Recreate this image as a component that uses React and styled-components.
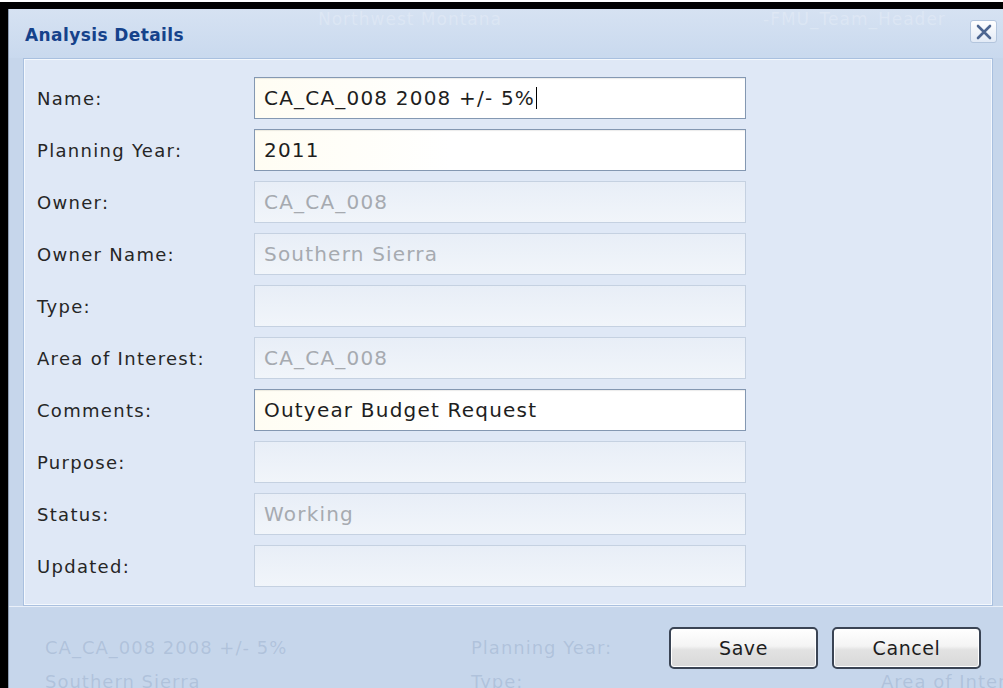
import React from "react";
import styled, { createGlobalStyle } from "styled-components";

const GlobalStyle = createGlobalStyle`
  html, body {
    margin: 0;
    padding: 0;
    background: #ffffff;
  }
  * {
    box-sizing: border-box;
  }
`

const Screen = styled.div`
  width: 1003px;
  height: 688px;
  padding-top: 2px;
  background: #ffffff;
  overflow: hidden;
`

const Frame = styled.div`
  height: 686px;
  border-top: 7px solid #000000;
  border-left: 8px solid #000000;
  display: flex;
`

const Dialog = styled.div`
  flex: 1;
  display: flex;
  flex-direction: column;
  background: #c6d6eb;
  border-left: 1px solid #8c9cb2;
  font-family: "DejaVu Sans", Verdana, sans-serif;
`

const TitleBar = styled.div`
  position: relative;
  height: 49px;
  display: flex;
  align-items: center;
  justify-content: space-between;
  padding: 2px 6px 0 16px;
  background: linear-gradient(#d6e2f2, #c9d9ee);
`

const Title = styled.div`
  font-size: 17px;
  font-weight: bold;
  letter-spacing: 0.4px;
  color: #15428b;
`

// faint text of the page under the window
const Backdrop = styled.div`
  position: absolute;
  inset: 0;
  pointer-events: none;
`

const GhostText = styled.span`
  position: absolute;
  left: ${p => p.x}px;
  top: ${p => p.y}px;
  font-size: ${p => p.size || 18}px;
  letter-spacing: 1px;
  white-space: nowrap;
  color: ${p => p.light ? "rgba(255,255,255,0.22)" : "rgba(120,145,180,0.28)"};
`

const CloseButton = styled.button`
  width: 27px;
  height: 23px;
  padding: 0;
  margin-top: -6px;
  display: flex;
  align-items: center;
  justify-content: center;
  border: 1px solid #b3c5dd;
  border-radius: 3px;
  background: linear-gradient(#ffffff, #e2eaf6);
  cursor: pointer;
`

const Panel = styled.div`
  margin: 0 10px 0 14px;
  padding: 18px 13px 18px 13px;
  background: #dfe8f6;
  border: 1px solid #a9c0df;
  box-shadow: inset 0 0 0 1px #f4f8fd;
  display: flex;
  flex-direction: column;
  gap: 10px;
`

const Row = styled.div`
  display: flex;
  align-items: center;
  height: 42px;
`

const Label = styled.div`
  width: 217px;
  font-size: 18px;
  letter-spacing: 1.3px;
  color: #262626;
`

const Field = styled.div`
  width: 492px;
  height: 42px;
  display: flex;
  align-items: center;
  padding: 0 9px;
  font-size: 20px;
  letter-spacing: 1.2px;
  white-space: nowrap;
  border: 1px solid ${p => p.disabled ? "#c5d1e1" : "#8498b2"};
  background: ${p => p.disabled
    ? "linear-gradient(#e8eef7, #f1f5fa)"
    : "linear-gradient(90deg, #fffdf3, #ffffff 40%)"};
  color: ${p => p.disabled ? "#a6aab0" : "#1e1e1e"};
  box-shadow: ${p => p.disabled ? "none" : "inset 0 1px 1px rgba(0,0,0,0.08)"};
`

const Caret = styled.span`
  display: inline-block;
  width: 1px;
  height: 22px;
  margin-left: 1px;
  background: #000;
`

const Footer = styled.div`
  position: relative;
  flex: 1;
  display: flex;
  justify-content: flex-end;
  align-items: flex-start;
  gap: 14px;
  padding: 20px 22px 0 0;
  border-top: 1px solid #eaf0f9;
`

const Button = styled.button`
  position: relative;
  width: 149px;
  height: 42px;
  font-family: "DejaVu Sans", Verdana, sans-serif;
  font-size: 19px;
  letter-spacing: 0.6px;
  color: #1e1e1e;
  border: 2px solid #3a4454;
  border-radius: 5px;
  background: linear-gradient(#ffffff 0%, #f4f4f4 45%, #e2e2e2 55%, #d8d8d8 100%);
  box-shadow: inset 0 0 0 1px #ffffff;
  cursor: pointer;
`

const fields = [
  { label: "Name:", value: "CA_CA_008 2008 +/- 5%", caret: true },
  { label: "Planning Year:", value: "2011" },
  { label: "Owner:", value: "CA_CA_008", disabled: true },
  { label: "Owner Name:", value: "Southern Sierra", disabled: true },
  { label: "Type:", value: "", disabled: true },
  { label: "Area of Interest:", value: "CA_CA_008", disabled: true },
  { label: "Comments:", value: "Outyear Budget Request" },
  { label: "Purpose:", value: "", disabled: true },
  { label: "Status:", value: "Working", disabled: true },
  { label: "Updated:", value: "", disabled: true },
];

function App() {
  return (
    <Screen>
      <GlobalStyle />
      <Frame>
        <Dialog>
          <TitleBar>
            <Backdrop>
              <GhostText light x={309} y={0} size={17}>Northwest Montana</GhostText>
              <GhostText light x={754} y={0} size={17}>-FMU_Team_Header</GhostText>
            </Backdrop>
            <Title>Analysis Details</Title>
            <CloseButton aria-label="Close">
              <svg width="18" height="18" viewBox="0 0 18 18">
                <path d="M3 3 L15 15 M15 3 L3 15" stroke="#4c6590" strokeWidth="2.6" strokeLinecap="round" />
              </svg>
            </CloseButton>
          </TitleBar>

          <Panel>
            {fields.map(f => (
              <Row key={f.label}>
                <Label>{f.label}</Label>
                <Field disabled={f.disabled}>
                  {f.value}
                  {f.caret && <Caret />}
                </Field>
              </Row>
            ))}
          </Panel>

          <Footer>
            <Backdrop>
              <GhostText x={36} y={30}>CA_CA_008 2008 +/- 5%</GhostText>
              <GhostText x={462} y={30}>Planning Year:</GhostText>
              <GhostText x={36} y={64}>Southern Sierra</GhostText>
              <GhostText x={462} y={64}>Type:</GhostText>
              <GhostText x={872} y={64}>Area of Interest</GhostText>
            </Backdrop>
            <Button>Save</Button>
            <Button>Cancel</Button>
          </Footer>
        </Dialog>
      </Frame>
    </Screen>
  );
}

export default App;
